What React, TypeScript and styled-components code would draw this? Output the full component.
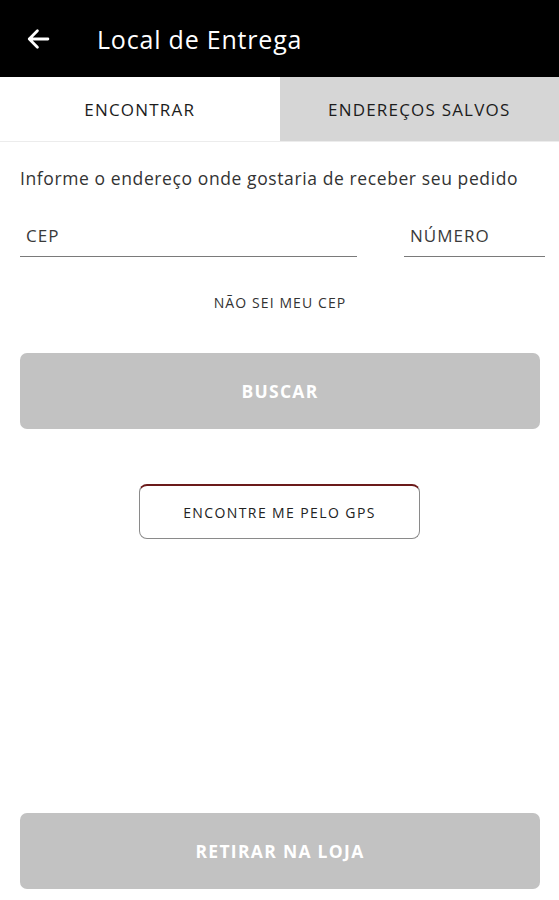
import styled, { createGlobalStyle } from "styled-components";

const GlobalStyle = createGlobalStyle`
  html, body {
    margin: 0;
    padding: 0;
    background: #fff;
    font-family: "Open Sans", Roboto, "Liberation Sans", sans-serif;
  }
  * {
    box-sizing: border-box;
  }
`;

const App = () => {
  return (
    <Screen>
      <GlobalStyle />
      <Header>
        <BackButton aria-label="Voltar">
          <svg width="28" height="28" viewBox="0 0 24 24" fill="none">
            <path
              d="M20.5 12H4.5M11.5 5L4.5 12L11.5 19"
              stroke="#fff"
              strokeWidth="2.4"
              strokeLinecap="round"
              strokeLinejoin="round"
            />
          </svg>
        </BackButton>
        <Title>Local de Entrega</Title>
      </Header>

      <Tabs>
        <Tab $active>ENCONTRAR</Tab>
        <Tab>ENDEREÇOS SALVOS</Tab>
      </Tabs>

      <Content>
        <Info>Informe o endereço onde gostaria de receber seu pedido</Info>

        <FieldRow>
          <Field $grow>
            <FieldLabel>CEP</FieldLabel>
          </Field>
          <Field $width="141px">
            <FieldLabel>NÚMERO</FieldLabel>
          </Field>
        </FieldRow>

        <LinkText>NÃO SEI MEU CEP</LinkText>

        <FilledButton>BUSCAR</FilledButton>

        <OutlineButton>ENCONTRE ME PELO GPS</OutlineButton>

        <Footer>
          <FilledButton>RETIRAR NA LOJA</FilledButton>
        </Footer>
      </Content>
    </Screen>
  );
};

export default App;

const Screen = styled.div`
  display: flex;
  flex-direction: column;
  width: 559px;
  height: 900px;
  background: #fff;
  overflow: hidden;
`;

const Header = styled.header`
  display: flex;
  align-items: center;
  height: 77px;
  padding-left: 23px;
  background: #000;
  flex-shrink: 0;
`;

const BackButton = styled.div`
  display: flex;
  align-items: center;
  justify-content: center;
  width: 30px;
  height: 30px;
  margin-right: 44px;
`;

const Title = styled.h1`
  margin: 0;
  color: #fff;
  font-size: 25px;
  font-weight: 400;
  letter-spacing: 0.8px;
`;

const Tabs = styled.nav`
  display: flex;
  height: 65px;
  border-bottom: 1px solid #ececec;
  flex-shrink: 0;
`;

const Tab = styled.div<{ $active?: boolean }>`
  flex: 1;
  display: flex;
  align-items: center;
  justify-content: center;
  background: ${({ $active }) => ($active ? "#fff" : "#d6d6d6")};
  color: #1c1c1c;
  font-size: 17px;
  letter-spacing: 1.2px;
`;

const Content = styled.main`
  flex: 1;
  display: flex;
  flex-direction: column;
  padding: 24px 19px 11px 20px;
`;

const Info = styled.p`
  margin: 0;
  color: #333;
  font-size: 17.5px;
  line-height: 24px;
  letter-spacing: 0.6px;
  white-space: nowrap;
`;

const FieldRow = styled.div`
  display: flex;
  gap: 47px;
  margin-top: 21px;
  margin-right: -5px;
`;

const Field = styled.div<{ $grow?: boolean; $width?: string }>`
  flex: ${({ $grow }) => ($grow ? 1 : "none")};
  width: ${({ $width }) => $width || "auto"};
  height: 46px;
  padding: 13px 0 0 6px;
  border-bottom: 1.5px solid #7a7a7a;
`;

const FieldLabel = styled.span`
  color: #3a3a3a;
  font-size: 17px;
  line-height: 24px;
  letter-spacing: 1px;
`;

const LinkText = styled.div`
  margin-top: 36px;
  text-align: center;
  color: #333;
  font-size: 14px;
  letter-spacing: 1.1px;
`;

const FilledButton = styled.div`
  display: flex;
  align-items: center;
  justify-content: center;
  height: 76px;
  margin-top: 41px;
  border-radius: 7px;
  background: #c2c2c2;
  color: #fff;
  font-size: 17.5px;
  font-weight: 700;
  letter-spacing: 1.3px;
`;

const OutlineButton = styled.div`
  display: flex;
  align-items: center;
  justify-content: center;
  align-self: center;
  width: 281px;
  height: 55px;
  margin-top: 55px;
  margin-right: 1px;
  border: 1px solid #8a8a8a;
  border-top: 2px solid #6b1a1a;
  border-radius: 8px;
  color: #222;
  font-size: 14px;
  letter-spacing: 1.4px;
`;

const Footer = styled.div`
  display: flex;
  flex-direction: column;
  margin-top: auto;

  ${FilledButton} {
    margin-top: 0;
  }
`;
